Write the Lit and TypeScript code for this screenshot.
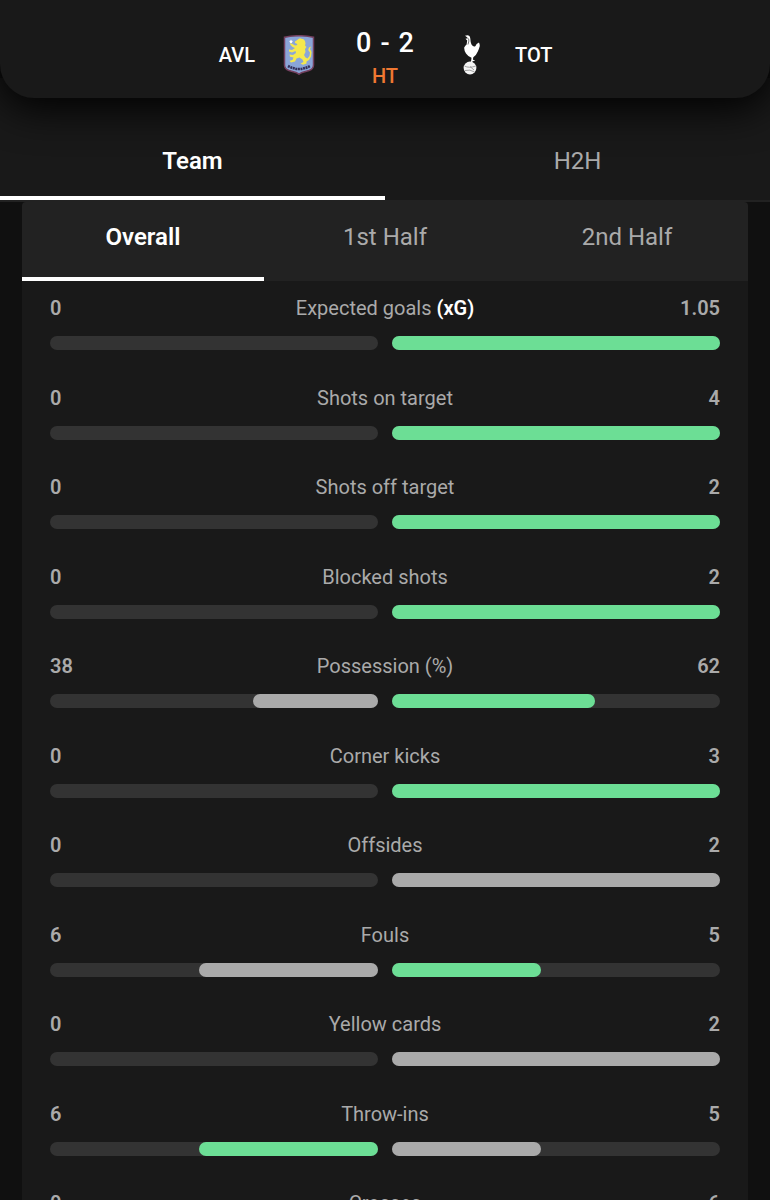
import { LitElement, html, css } from "lit";
import { customElement, state, property } from "lit/decorators.js";
import { classMap } from "lit/directives/class-map.js";
import { styleMap } from "lit/directives/style-map.js";

type Side = "home" | "away";
type Stat = {
  label: string;
  strong?: string;
  home: number;
  away: number;
  best?: Side;
};

const stats: Stat[] = [
  { label: "Expected goals", strong: "(xG)", home: 0, away: 1.05, best: "away" },
  { label: "Shots on target", home: 0, away: 4, best: "away" },
  { label: "Shots off target", home: 0, away: 2, best: "away" },
  { label: "Blocked shots", home: 0, away: 2, best: "away" },
  { label: "Possession (%)", home: 38, away: 62, best: "away" },
  { label: "Corner kicks", home: 0, away: 3, best: "away" },
  { label: "Offsides", home: 0, away: 2 },
  { label: "Fouls", home: 6, away: 5, best: "away" },
  { label: "Yellow cards", home: 0, away: 2 },
  { label: "Throw-ins", home: 6, away: 5, best: "home" },
  { label: "Crosses", home: 0, away: 6, best: "away" },
];

const villa = html`
  <svg viewBox="0 0 36 40" width="36" height="40" role="img" aria-label="Aston Villa">
    <path
      d="M3.5 2.2Q18-.8 32.500 2.200V30Q32.500 34 28 35.500L21 37.500Q19 38.200 18 39.300Q17 38.200 15 37.500L8 35.500Q3.500 34 3.500 30Z"
      fill="#8aa5d8"
      stroke="#74405f"
      stroke-width="1.500"
    />
    <path
      d="M15.500 5.500L17.500 4L19 3.200L20.500 3.800L22.500 4.200L24 6L24.500 8.500L24 10.500L25.500 12L24 14L24.500 17L23 20L24.500 22.500L26.500 23.500L28.500 21L29 17.500L27.200 15L28 12.500L30 11.500L29 14L30.500 17L30 21.500L28 25L25.500 26.500L25.500 28.500L22 29.800L19.500 28.500L22.500 27L21.500 24.500L18.500 22.500L15.500 23.500L14 26.500L10 27.500L8.500 25.800L11.500 25L12.500 22.500L9 21.800L8.500 19.500L12 20L15 18L14.500 16L11 17.500L8 16.500L8 14.500L11 15L14 13L11.500 12L9.500 10L9 8L11.500 9L14 10.500L16.500 10L15.500 8.500L14 8L14 6.500Z"
      fill="#f5e84c"
    />
    <path d="M8.500 6.500l.7 1.300 1.300.2-1 1 .2 1.300-1.200-.6-1.200.6.2-1.300-1-1 1.300-.2z" fill="#fff" transform="translate(1.500 -2)" />
    <path d="M7 31Q18 37 29 31" fill="none" stroke="#34305a" stroke-width="2.600" stroke-dasharray="2 .6" />
  </svg>
`;

const spurs = html`
  <svg viewBox="0 0 36 40" width="36" height="40" role="img" aria-label="Tottenham Hotspur">
    <path
      d="M12 .8Q16.800-.8 17.300 3.500Q17.400 7 18.500 9.500Q20.500 12.500 22.500 11Q23 8.500 26 7.500Q26.800 9 26.800 11Q26 14 24.800 16.500Q23.500 20 20.300 22.300L19.900 24.800L22.200 25.200L19.500 26.600L17.500 27.800L18.200 25.500L18.500 22.800Q15 21.500 13 18.500Q11 15.500 11.200 12.500Q12.300 10.500 13.600 9.500L14.200 5.500L12.500 3.800L15 3.300Q14 2 12 .8Z"
      fill="#fff"
    />
    <path d="M14.800 3.500Q16 3 15.900 6L15 9.500" fill="none" stroke="#777" stroke-width="1" />
    <circle cx="17" cy="33" r="6.400" fill="#f4f4f4" />
    <path
      d="M11.500 31Q16 33.500 22.800 31M12 35.500Q17 34 21.500 37M17 31.500L21 35"
      fill="none"
      stroke="#8a8a8a"
      stroke-width=".8"
    />
  </svg>
`;

@customElement("stat-row")
export class StatRow extends LitElement {
  @property({ attribute: false })
  public stat: Stat;

  static styles = css`
    :host {
      display: block;
    }
    .line {
      display: grid;
      grid-template-columns: 1fr auto 1fr;
      margin-bottom: 16px;
      font-size: 20px;
      line-height: 24px;
    }
    .value {
      font-weight: 600;
    }
    .value.away {
      text-align: right;
    }
    strong {
      color: #fff;
      font-weight: 600;
    }
    .bars {
      display: grid;
      grid-template-columns: 1fr 1fr;
      gap: 14px;
    }
    .track {
      display: flex;
      height: 14px;
      border-radius: 7px;
      background: #333;
    }
    .track.home {
      justify-content: flex-end;
    }
    .fill {
      border-radius: 7px;
      background: #aaa;
    }
    .fill.best {
      background: #6cde95;
    }
  `;

  private bar(side: Side) {
    const { home, away, best } = this.stat;
    const width = `${(this.stat[side] / (home + away)) * 100}%`;
    return html`<div class="track ${side}">
      <div
        class=${classMap({ fill: true, best: best === side })}
        style=${styleMap({ width })}
      ></div>
    </div>`;
  }

  render() {
    const { label, strong, home, away } = this.stat;
    return html`<div class="line">
        <span class="value">${home}</span>
        <span>${label}${strong ? html` <strong>${strong}</strong>` : ""}</span>
        <span class="value away">${away}</span>
      </div>
      <div class="bars">${this.bar("home")}${this.bar("away")}</div>`;
  }
}

@customElement("app-root")
export class AppRoot extends LitElement {
  @state()
  private view = "Team";
  @state()
  private period = "Overall";

  static styles = css`
    :host {
      display: flex;
      flex-direction: column;
      height: 100vh;
      background: #101010;
      color: #aaa;
      font-family: Roboto, "Liberation Sans", sans-serif;
    }
    header {
      position: relative;
      z-index: 1;
      display: grid;
      grid-template-columns: 1fr 36px 84px 36px 1fr;
      gap: 26px;
      align-items: center;
      padding: 22px 0 10px;
      border-radius: 0 0 34px 34px;
      background: #191919;
      box-shadow: 0 10px 40px #000;
      color: #fff;
      font-size: 20px;
      font-weight: 500;
      line-height: 24px;
    }
    header svg {
      display: block;
    }
    .home {
      text-align: right;
    }
    .score {
      display: flex;
      justify-content: center;
      gap: 9px;
      font-size: 27px;
      line-height: 42px;
    }
    .status {
      color: #f07832;
      text-align: center;
    }
    .tabs {
      display: flex;
      flex: none;
    }
    .tabs button {
      flex: 1;
      padding: 21px 0 26px;
      border: 0;
      border-bottom: 4px solid transparent;
      background: none;
      color: inherit;
      font: inherit;
      font-size: 24px;
      line-height: 28px;
      cursor: pointer;
    }
    .tabs button[aria-selected="true"] {
      border-color: #fff;
      color: #fff;
      font-weight: 600;
    }
    /* runs up behind the rounded corners of the header */
    .views {
      margin-top: -20px;
      border-bottom: 2px solid #222;
      background: #191919;
    }
    .views button {
      padding: 69px 0 21px;
    }
    main {
      flex: 1;
      min-height: 0;
      overflow-y: auto;
      scrollbar-width: none;
      padding: 0 22px;
    }
    .periods {
      border-radius: 4px 4px 0 0;
      background: #222;
    }
    ul {
      margin: 0;
      padding: 15px 28px 0;
      background: #191919;
      list-style: none;
    }
    li {
      padding-bottom: 20px;
    }
    li:nth-child(odd) {
      padding-bottom: 36px;
    }
    li:nth-child(even) {
      padding-bottom: 35px;
    }
  `;

  private tab(name: string, current: string, select: (name: string) => void) {
    return html`<button
      role="tab"
      aria-selected=${name === current}
      @click=${() => select(name)}
    >
      ${name}
    </button>`;
  }

  render() {
    return html`<header>
        <span class="home">AVL</span>
        ${villa}
        <div>
          <div class="score"><span>0</span><span>-</span><span>2</span></div>
          <div class="status">HT</div>
        </div>
        ${spurs}
        <span>TOT</span>
      </header>
      <div class="tabs views" role="tablist">
        ${["Team", "H2H"].map((n) =>
          this.tab(n, this.view, (v) => (this.view = v))
        )}
      </div>
      <main>
        <div class="tabs periods" role="tablist">
          ${["Overall", "1st Half", "2nd Half"].map((n) =>
            this.tab(n, this.period, (v) => (this.period = v))
          )}
        </div>
        <ul>
          ${stats.map(
            (s) => html`<li><stat-row .stat=${s}></stat-row></li>`
          )}
        </ul>
      </main>`;
  }
}
